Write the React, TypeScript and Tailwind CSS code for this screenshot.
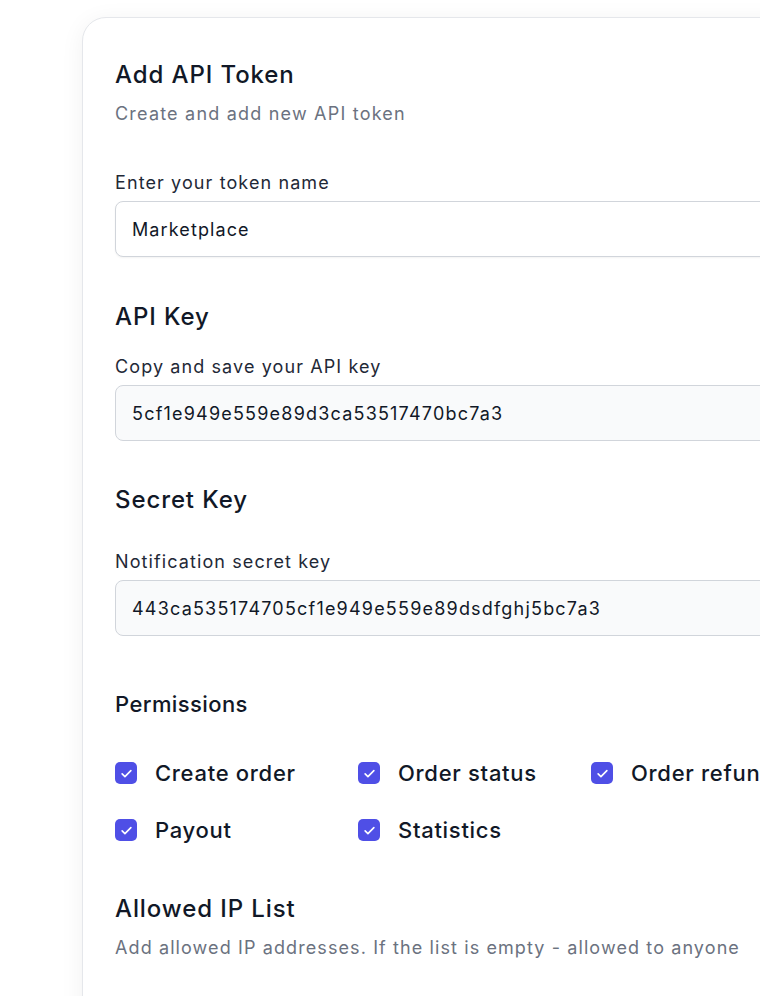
import React from 'react';

const perms = [
  { label: 'Create order', col: 0 },
  { label: 'Order status', col: 1 },
  { label: 'Order refund', col: 2 },
  { label: 'Payout', col: 0 },
  { label: 'Statistics', col: 1 },
];

const Check: React.FC = () => (
  <span className="flex h-[22px] w-[22px] shrink-0 items-center justify-center rounded-[5px] bg-[#4f4fe6]">
    <svg width="15" height="15" viewBox="0 0 24 24" fill="none" stroke="white" strokeWidth="2.6" strokeLinecap="round" strokeLinejoin="round">
      <path d="M5 12.5l4.5 4.5L19 7.5" />
    </svg>
  </span>
);

const App: React.FC = () => {
  return (
    <div className="h-[996px] w-[760px] overflow-hidden bg-white pl-[82px] pt-[17px]" style={{ fontFamily: 'Inter, "Noto Sans", sans-serif' }}>
      <div className="w-[760px] min-h-[1100px] rounded-[24px] border border-[#e5e7eb] bg-white pl-[32px] pt-[41px] shadow-[0_4px_24px_rgba(0,0,0,0.06)]">
        <h1 className="text-[24px] leading-[32px] font-medium tracking-[0.9px] text-[#111827]">Add API Token</h1>
        <p className="mt-[9px] text-[18px] leading-[28px] tracking-[1.2px] text-[#6b7280]">Create and add new API token</p>

        <label className="mt-[41px] block text-[18px] leading-[28px] tracking-[1.1px] text-[#1f2937]">Enter your token name</label>
        <div className="mt-[4px] flex h-[56px] w-[700px] items-center rounded-[8px] border border-[#d1d5db] bg-white px-[16px] text-[18px] tracking-[1.1px] text-[#111827] shadow-[0_1px_2px_rgba(0,0,0,0.05)]">
          Marketplace
        </div>

        <h2 className="mt-[44px] text-[24px] leading-[32px] font-medium tracking-[0.9px] text-[#111827]">API Key</h2>
        <label className="mt-[20px] block text-[18px] leading-[28px] tracking-[1.1px] text-[#1f2937]">Copy and save your API key</label>
        <div className="mt-[4px] flex h-[56px] w-[700px] items-center rounded-[8px] border border-[#d1d5db] bg-[#f9fafb] px-[16px] text-[18px] tracking-[1.2px] text-[#111827]">
          5cf1e949e559e89d3ca53517470bc7a3
        </div>

        <h2 className="mt-[43px] text-[24px] leading-[32px] font-medium tracking-[0.9px] text-[#111827]">Secret Key</h2>
        <label className="mt-[32px] block text-[18px] leading-[28px] tracking-[1.1px] text-[#1f2937]">Notification secret key</label>
        <div className="mt-[4px] flex h-[56px] w-[700px] items-center rounded-[8px] border border-[#d1d5db] bg-[#f9fafb] px-[16px] text-[18px] tracking-[1.2px] text-[#111827]">
          443ca535174705cf1e949e559e89dsdfghj5bc7a3
        </div>

        <h3 className="mt-[52px] text-[22px] leading-[32px] font-medium tracking-[0.4px] text-[#111827]">Permissions</h3>
        <div className="mt-[37px] grid grid-cols-[243px_233px_240px] gap-y-[25px]">
          {perms.map(p => (
            <div key={p.label} className="flex h-[32px] items-center gap-[18px]">
              <Check />
              <span className="whitespace-nowrap text-[22px] font-medium tracking-[0.7px] text-[#111827]">{p.label}</span>
            </div>
          ))}
        </div>

        <h2 className="mt-[47px] text-[24px] leading-[32px] font-medium tracking-[0.9px] text-[#111827]">Allowed IP List</h2>
        <p className="mt-[9px] text-[18px] leading-[28px] tracking-[1.1px] text-[#6b7280]">Add allowed IP addresses. If the list is empty - allowed to anyone</p>
      </div>
    </div>
  );
};

export default App;
